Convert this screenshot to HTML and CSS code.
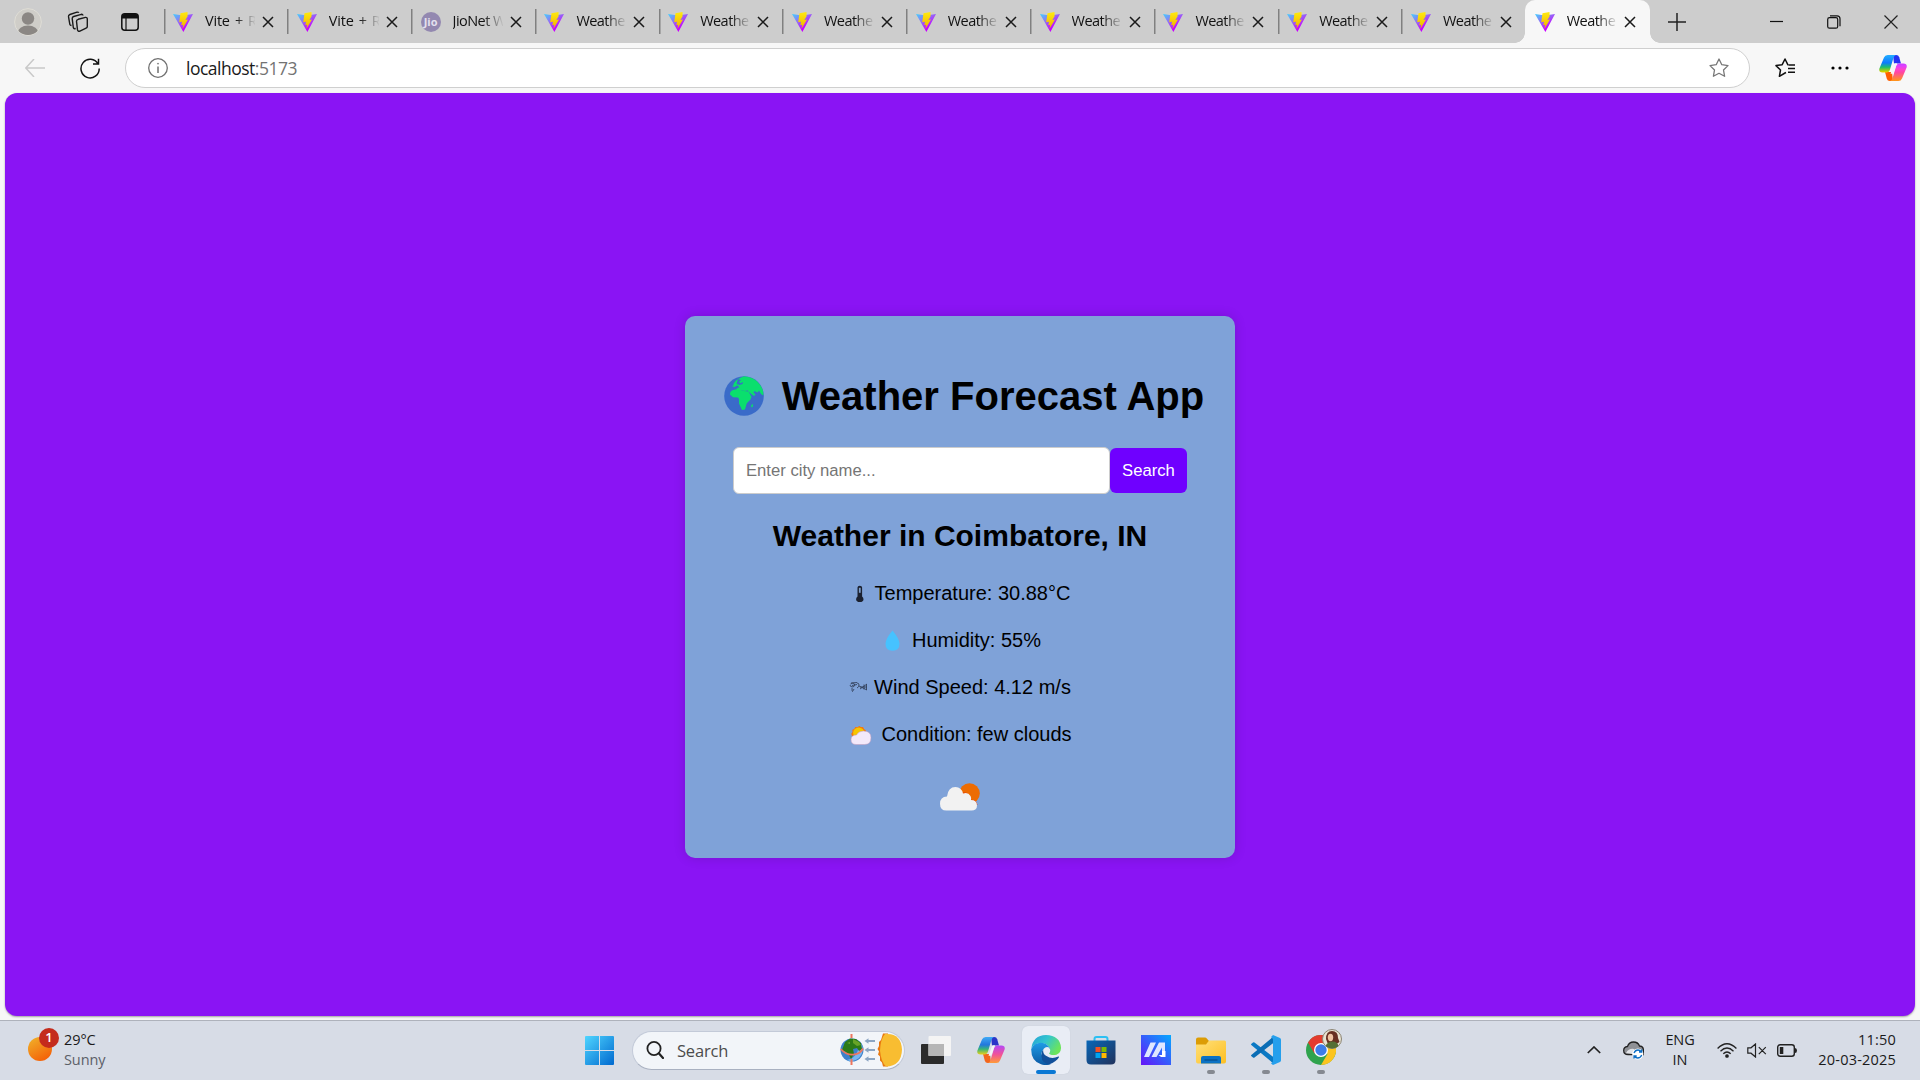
FILE: index.html
```html
<!DOCTYPE html>
<html lang="en">
<head>
<meta charset="utf-8">
<title>Weather Forecast App</title>
<link rel="stylesheet" href="styles.css">
</head>
<body>
<svg class="defs" aria-hidden="true">
  <defs>
    <linearGradient id="vA" x1="0" y1="0" x2=".6" y2=".8"><stop offset="0" stop-color="#41d1ff"/><stop offset=".45" stop-color="#8a7cf5"/><stop offset="1" stop-color="#c800ff"/></linearGradient>
    <linearGradient id="vB" x1="0" y1="0" x2="0" y2="1"><stop offset="0" stop-color="#ffea10"/><stop offset="1" stop-color="#eeb000"/></linearGradient>
    <linearGradient id="cA" x1="0" y1="0" x2="0" y2="1"><stop offset="0" stop-color="#3fa9f5"/><stop offset=".45" stop-color="#2277dd"/><stop offset=".7" stop-color="#38b678"/><stop offset="1" stop-color="#e7d01a"/></linearGradient>
    <linearGradient id="cB" x1="0" y1="0" x2="0" y2="1"><stop offset="0" stop-color="#b548f5"/><stop offset=".5" stop-color="#f0529a"/><stop offset="1" stop-color="#ff9c38"/></linearGradient>
    <linearGradient id="wn" x1="0" y1="0" x2="1" y2="1"><stop offset="0" stop-color="#4fd5ff"/><stop offset="1" stop-color="#0069cf"/></linearGradient>
    <linearGradient id="eA" x1="0" y1="0" x2="1" y2=".5"><stop offset="0" stop-color="#249fd6"/><stop offset=".5" stop-color="#32c5cf"/><stop offset="1" stop-color="#6be45c"/></linearGradient>
    <linearGradient id="eB" x1="0" y1="0" x2="0" y2="1"><stop offset="0" stop-color="#1e9be5"/><stop offset="1" stop-color="#0c59a4"/></linearGradient>
    <linearGradient id="st" x1="0" y1="0" x2="1" y2="1"><stop offset="0" stop-color="#0867b8"/><stop offset="1" stop-color="#21325c"/></linearGradient>
    <linearGradient id="ai" x1="1" y1="0" x2="0" y2="1"><stop offset="0" stop-color="#04a8ff"/><stop offset="1" stop-color="#6713f8"/></linearGradient>
    <linearGradient id="fd" x1="0" y1="0" x2="1" y2="1"><stop offset="0" stop-color="#ffe07a"/><stop offset="1" stop-color="#fdbf22"/></linearGradient>
    <symbol id="vite" viewBox="0 0 20 20"><path d="M0 2 10 3.500 20 2 10.400 20Z" fill="url(#vA)"/><path d="M14.500 0 7.500 1.200 6.200 10.200 9 9.700 8.300 13.200 10.200 12.800 9.400 17 15 7.400 12.400 7.900 14.600 4.200Z" fill="url(#vB)"/></symbol>
    <symbol id="x" viewBox="0 0 12 12"><path d="M1 1l10 10M11 1 1 11" fill="none" stroke="#1a1a1a" stroke-width="1.500"/></symbol>
    <symbol id="copilot" viewBox="0 0 28 26"><path d="M14 0h3.200q2.300 0 3 2.300L22 8.500h-7Z" fill="#2b35c8"/><path d="M14 26h-3.200q-2.300 0-3-2.300L6 17h7Z" fill="#f2661d"/><path d="M5 2.600Q5.900 0 8.700 0H17q-1.800.3-2.600 3L11 14.500Q10.200 17.400 7.400 17.400H3.500Q-.5 17.400.4 13.500Z" fill="url(#cA)"/><path d="M23 23.400q-.9 2.600-3.700 2.600H11q1.800-.3 2.600-3L17 11.500q.8-2.900 3.600-2.900h3.900q4 0 3.100 3.900Z" fill="url(#cB)"/><path d="m14.800 9.500-3.300 9.300h1.600q1.200 0 1.700-1.500L18 8.200h-1.400q-1.300 0-1.800 1.300Z" fill="#f5f5f8"/></symbol>
  </defs>
</svg>

<header class="browser">
  <div class="tabstrip">
    <div class="strip-tools">
      <svg class="avatar" viewBox="0 0 28 28"><defs><clipPath id="av"><circle cx="14" cy="14" r="13"/></clipPath></defs><circle cx="14" cy="14" r="13.400" fill="#cfcdc8" stroke="#dfddd6"/><g fill="#8b8784" clip-path="url(#av)"><circle cx="14" cy="10.500" r="6.200"/><ellipse cx="14" cy="25.500" rx="10.500" ry="8"/></g></svg>
      <svg class="work" viewBox="0 0 22 22" fill="none" stroke="#1a1a1a" stroke-width="1.400" stroke-linejoin="round"><path d="m11.200 8.300 7.300-1.900q1.800-.2 1.800 1.500v7.700q0 1.200-1.200 1.600l-6.200 2.900q-2 .6-2.400-1.200L9.500 10.300q-.1-1.500 1.700-2Z"/><path d="m8.700 17.500-1.100.300q-1-.1-1.300-1.300L5.200 7.700q-.1-1.700 1.500-2.200l7.600-2.200q1.500-.1 1.700 1.200"/><path d="M4.500 14.500q-1.300 0-1.700-1.300L1.500 5.700Q1.300 4.100 2.900 3.500L10 1.200q1.400-.2 1.800.6"/></svg>
      <svg class="tabact" viewBox="0 0 18 18"><rect x=".8" y=".8" width="16.400" height="16.400" rx="3" fill="none" stroke="#111" stroke-width="1.500"/><path d="M1 5V3.500Q1 1 3.500 1h11Q17 1 17 3.500V5.500H1Z" fill="#111"/><path d="M5 5v12" stroke="#111" stroke-width="1.200"/></svg>
    </div>
    <div class="tab"><svg class="fav"><use href="#vite"/></svg><span class="title spaced">Vite + R</span><svg class="close"><use href="#x"/></svg></div>
    <div class="tab"><svg class="fav"><use href="#vite"/></svg><span class="title spaced">Vite + R</span><svg class="close"><use href="#x"/></svg></div>
    <div class="tab"><span class="fav jio">Jio</span><span class="title">JioNet W</span><svg class="close"><use href="#x"/></svg></div>
    <div class="tab"><svg class="fav"><use href="#vite"/></svg><span class="title">Weathe</span><svg class="close"><use href="#x"/></svg></div>
    <div class="tab"><svg class="fav"><use href="#vite"/></svg><span class="title">Weathe</span><svg class="close"><use href="#x"/></svg></div>
    <div class="tab"><svg class="fav"><use href="#vite"/></svg><span class="title">Weathe</span><svg class="close"><use href="#x"/></svg></div>
    <div class="tab"><svg class="fav"><use href="#vite"/></svg><span class="title">Weathe</span><svg class="close"><use href="#x"/></svg></div>
    <div class="tab"><svg class="fav"><use href="#vite"/></svg><span class="title">Weathe</span><svg class="close"><use href="#x"/></svg></div>
    <div class="tab"><svg class="fav"><use href="#vite"/></svg><span class="title">Weathe</span><svg class="close"><use href="#x"/></svg></div>
    <div class="tab"><svg class="fav"><use href="#vite"/></svg><span class="title">Weathe</span><svg class="close"><use href="#x"/></svg></div>
    <div class="tab"><svg class="fav"><use href="#vite"/></svg><span class="title">Weathe</span><svg class="close"><use href="#x"/></svg></div>
    <div class="tab active"><svg class="fav"><use href="#vite"/></svg><span class="title">Weathe</span><svg class="close"><use href="#x"/></svg></div>
    <svg class="newtab" viewBox="0 0 18 18"><path d="M9 0v18M0 9h18" stroke="#222" stroke-width="1.500"/></svg>
    <div class="window-buttons">
      <svg viewBox="0 0 14 14"><path d="M0 6.500h13" stroke="#111" stroke-width="1.200"/></svg>
      <svg viewBox="0 0 14 14" fill="none" stroke="#111" stroke-width="1.200"><rect x=".7" y="2.700" width="10" height="10.500" rx="1.800"/><path d="M3 .8h7q3 0 3 3v7.500"/></svg>
      <svg viewBox="0 0 14 14"><path d="m.5.5 13 13M13.500.5l-13 13" stroke="#222" stroke-width="1.200"/></svg>
    </div>
  </div>
  <div class="toolbar">
    <svg class="back" viewBox="0 0 20 18"><path d="M9 0 .8 9 9 18M1 9h19" fill="none" stroke="#c9c9c9" stroke-width="1.500"/></svg>
    <svg class="reload" viewBox="0 0 20 21"><path d="M18 6A9.100 9.300 0 1 0 19.200 10.500M18.500.8V6H13" fill="none" stroke="#111" stroke-width="1.500"/></svg>
    <div class="address">
      <svg class="info" viewBox="0 0 20 20" fill="none" stroke="#707070"><circle cx="10" cy="10" r="9.300" stroke-width="1.300"/><path d="M10 8.500V15" stroke-width="1.500"/><circle cx="10" cy="5.700" r=".5"/></svg>
      <span class="url">localhost<span class="port">:5173</span></span>
      <svg class="star" viewBox="0 0 20 20"><path d="m10 1 2.800 5.700 6.200.9-4.500 4.400 1.100 6.300L10 15.300l-5.600 3 1.100-6.300L1 7.600l6.200-.9Z" fill="none" stroke="#777" stroke-width="1.300" stroke-linejoin="round"/></svg>
    </div>
    <svg class="favs" viewBox="0 0 20 20"><path d="M11 14.500 10 15l-5.600 3.300L5.500 12 1 7.600l6.200-.9L10 1l2.800 5.700 1 .2M13 10.500h7M13 14.300h7M14 6.900h6" fill="none" stroke="#111" stroke-width="1.500" stroke-linejoin="round"/></svg>
    <svg class="dots" viewBox="0 0 18 4"><circle cx="2" cy="2" r="1.600"/><circle cx="9" cy="2" r="1.600"/><circle cx="16" cy="2" r="1.600"/></svg>
    <svg class="copilot vivid"><use href="#copilot"/></svg>
  </div>
</header>

<div class="viewport">
  <main class="page">
    <section class="card">
      <h1><svg class="globe" viewBox="0 0 40 40"><circle cx="20" cy="20" r="19.800" fill="#3a6bc9"/><path d="M9.500 8Q12 3.500 16 2l4-1.700Q30 1 35.500 8q4.500 6 3.800 11.500L37 18l-2-3.500-1.500 2-3-1.500-1 1.500 2 2-1.500 1.500-4-3-2.300-2.500-3.200.5-2.500-1-2 .5-3.500-2 3-1.300-2.300-2-3 2-2.500-1.500L13.500 10l-4 .5Zm-1 6.200 5.500-1.500 6 2.300 4.500.5 3 5.500-1 2.500-3 3-1 1.500-1.500 5.500-3 .5-3-6.500V23l-1-1.500-5-.3-3-2.700q-.2-3 2.500-4.300Z" fill="#0adf6d"/><path d="m14 3 3 1.200-2 1.500 1.500 1.500 2.500-1.200-.5 2-3 1-3-1Z" fill="#3a6bc9"/><path d="m27 29.500 1.800-1.800.2 2.800-1.500 1Z" fill="#0adf6d"/></svg><span>Weather Forecast App</span></h1>
      <form class="search">
        <input type="text" placeholder="Enter city name...">
        <button type="button">Search</button>
      </form>
      <h2>Weather in Coimbatore, IN</h2>
      <p><svg class="narrow" viewBox="0 0 19 22"><path d="M7.500 4.500q0-1.700 2.300-1.700t2.300 1.700v9q1.400 1 1.400 2.700 0 2.800-3.700 2.800t-3.700-2.800q0-1.700 1.400-2.700Z" fill="#1b2130"/><path d="M9.800 4.800v5" stroke="#7e9ecb" stroke-width="1.800"/></svg><span>Temperature: 30.88°C</span></p>
      <p><svg class="wide" viewBox="0 0 27 22"><path d="M13.500.5q7 8.500 7 13.200 0 7-7 7t-7-7Q6.500 9 13.500.5Z" fill="#46c2ff"/></svg><span>Humidity: 55%</span></p>
      <p><svg class="narrow" viewBox="0 0 19 22" fill="none" stroke="#34435f" stroke-width=".9"><path d="M1.500 7q3-2 4 0T4 10q-3 0-3-2m1-2L8 5.500M3 8.500l5-1M5 12q-1 2-1.500 2.500T3 11M8 6q2 0 2 2T8 11M10 9l8 4M11 12l7-5M15 7.500v5M17.500 7v6M11 10h7"/></svg><span>Wind Speed: 4.12 m/s</span></p>
      <p><svg class="wide cond" viewBox="0 0 27 22"><path d="m4 13-.8-2.200L4.500 9l-.2-2.200 2-.8.900-2 2.200.3L11.200 3l1.800 1 2.100 0 .9 2 1.800 1.200v2.300L17 13Z" fill="#f47a0c"/><circle cx="10.700" cy="10" r="5.600" fill="#f6c600"/><path d="M8 21.500q-5 0-5-5Q3 12 8.500 12 10.500 8 15.500 8q7.500 0 7.500 6.800t-6.500 6.700Z" fill="#f3e9fa" stroke="#c59bbb" stroke-width=".5"/></svg><span>Condition: few clouds</span></p>
      <svg class="sky" viewBox="0 0 40 28"><circle cx="29.500" cy="10.500" r="10.300" fill="#ed6c02"/><path d="M20 11q1.500-2 4-1.500 4-.5 5 3.500 1 4 4 4 3.500.5 4.500 5L25 22Z" fill="#e33d05"/><path d="M6.500 27.500Q0 27.500 0 20.700t7-7.200Q8 4 15.500 4q6 0 7.500 6.500 5-2 7.500 2.500 1 2 .5 4 6 0 6 5.500 0 5-5.500 5Z" fill="#f2f2f2"/></svg>
    </section>
  </main>
</div>

<footer class="taskbar">
  <div class="widgets">
    <span class="sun"><b>1</b></span>
    <div class="lines"><span>29°C</span><span class="muted">Sunny</span></div>
  </div>
  <nav class="apps">
    <svg class="win" viewBox="0 0 29 29" fill="url(#wn)"><path d="M1 0h13v14H0V1Q0 0 1 0Zm14 0h13q1 0 1 1v13H15ZM0 15h14v14H1q-1 0-1-1Zm15 0h14v13q0 1-1 1H15Z"/></svg>
    <div class="find">
      <svg class="lens" viewBox="0 0 18 18" fill="none" stroke="#222"><circle cx="8" cy="7.500" r="6.600" stroke-width="1.800"/><path d="m12.800 12.300 4.200 4.700" stroke-width="2.200" stroke-linecap="round"/></svg>
      <span>Search</span>
      <svg class="doodle" viewBox="0 0 62 34"><circle cx="12" cy="17" r="11.500" fill="#3d80cb"/><path d="M20 9q6 8-1 16-6 5-12 2 11-2 13-18Z" fill="#79b7ef"/><path d="m5 9 5-3.500 6 .5 5 4 1 6-3 2-2-3-4 1 1 5-3 5-2-4-3-3-4-2Z" fill="#2c7a17"/><path d="m13 6 6 3 2 3-4 1-4-3ZM7 10l3-1v2Z" fill="#67a428"/><path d="M11.500 1v4M11.500 26v6" stroke="#ed765e" stroke-width="2"/><path d="M.8 16q5 6 12 5.700T23 15.500" fill="none" stroke="#ed765e" stroke-width="1.700"/><g fill="#8ba5c3"><path d="m24.500 8 4-2.800V7H35v2h-6.500v1.800Zm0 9 4-2.800V16H35v2h-6.500v1.800Zm0 9 4-2.800V25H35v2h-6.500v1.800Z"/></g><path d="M43 .5h5v33h-5l-1-4-2-2v-4l-2-2 1-3-1.500-2.500L39 13v-4l2-2Z" fill="#e87810"/><path d="M45 1q16-1.500 17 15.500Q61.500 33 46 33.500 41 29 40 17.500 40.500 6 45 1Z" fill="#f8bd31"/></svg>
    </div>
    <div class="app"><svg class="taskview" viewBox="0 0 30 28"><rect y="8" width="23" height="20" rx="1" fill="#2b2b2b"/><rect x="7.500" y="0" width="22.500" height="20" rx="1" fill="#f4f4f4"/><path d="M7.500 8H23v12H7.500Z" fill="#b6b6b6"/></svg></div>
    <div class="app"><svg class="copilot"><use href="#copilot"/></svg></div>
    <div class="app current"><svg class="big" viewBox="0 0 30 30"><path d="M.3 13.500Q2 .3 15 0q14 .5 15 12.500.2 7.500-8 7.700-4.500 0-4-2 1.700-1.500 1-4Q17.500 9 11 8 4 7.500.3 13.500Z" fill="url(#eA)"/><path d="M.2 14Q4 6.500 12 8q5.500 1.300 7 6-8-1.500-8.500 4.500.5 8 9.500 10.500-5 2-10 .3Q0 26 .2 14Z" fill="url(#eB)"/><path d="M11 16.500q-2.500 10 5.500 12.800 5 0 10-5 2.500-3 1-2.800-7 3-12-.5-4-2-3-6-1 .5-1.500 1.500Z" fill="#12509a"/><path d="M12.500 14q2.500-3 5.500-1.500 1.500 2 .8 4-1.500 1.800 0 3 3 1.300 9 .5-6 3.500-12 .5-4-2.500-3.300-6.500Z" fill="#e9edf5"/></svg></div>
    <div class="app"><svg class="big" viewBox="0 0 30 30"><path d="M8.500 7V4q0-2 2-2h9q2 0 2 2v3" fill="none" stroke="#2cc0f3" stroke-width="2"/><path d="M.5 5.500h29v19.500q0 4.500-4.500 4.500H5Q.5 29.500.5 25Z" fill="url(#st)"/><path d="M9.500 12h5v5h-5Z" fill="#f25022"/><path d="M15.500 12h5v5h-5Z" fill="#7fba00"/><path d="M9.500 18h5v5h-5Z" fill="#00a4ef"/><path d="M15.500 18h5v5h-5Z" fill="#ffb900"/></svg></div>
    <div class="app"><svg class="big" viewBox="0 0 30 30"><path d="M0 0h30v30H0Z" fill="url(#ai)"/><path d="M3 22 9.500 7.500H15L8 22Zm7.500 0L18 7.500h6V16h-3v-3.500L15.500 22Z" fill="#dfe6ff"/><path d="M21 16h3.500v6H20l-2.500-2H21Z" fill="#fff"/></svg></div>
    <div class="app open"><svg class="big" viewBox="0 0 30 30"><path d="M0 4.500Q0 2.500 2 2.500h7q1 0 2 1.200L13 6v6H0Z" fill="#dc9c04"/><path d="M0 9.500h10L13 5.500h15.500Q30 5.500 30 7v19.500q0 2-2 2H2q-2 0-2-2Z" fill="url(#fd)"/><path d="M5 28.500V23q0-2 2-2h16q2 0 2 2v5.500Z" fill="#0c72c4"/><path d="M8.500 25h13" stroke="#07508f" stroke-width="1.300"/></svg></div>
    <div class="app open"><svg class="big" viewBox="0 0 30 30"><path d="M0 9.800q0-.8.800-1.300L2 7.500q.7-.4 1.500 0L23 22.500V29Z" fill="#0b79c4"/><path d="M0 20.200q0 .8.800 1.300l1.200 1q.7.4 1.500 0L23 7.500V1Z" fill="#0a6db5"/><path d="m22 0 7 3q1 .5 1 1.700v20.600q0 1.200-1 1.700l-7 3-2-1.500 2-2V4L20 2Z" fill="#259fec"/></svg></div>
    <div class="app open chrome"><svg class="big" viewBox="0 0 30 30"><circle cx="15" cy="15" r="15" fill="#2fa34d"/><path d="M28 7.500A15 15 0 0 1 15 30l6.500-11L15 7.500Z" fill="#fbc41f"/><path d="M2 7.500 8.500 18.500 15 8.200l13-.7A15 15 0 0 0 2 7.500Z" fill="#e33b2e"/><circle cx="15" cy="15" r="7" fill="#fff"/><circle cx="15" cy="15" r="5.700" fill="#3d7de8"/></svg><svg class="profile" viewBox="0 0 20 20"><circle cx="10" cy="10" r="9.500" fill="#e8e2d0" stroke="#8b8473"/><path d="M4 10Q4 2 10 2t6 7l1.500 4-3 2-9-1Z" fill="#683022"/><ellipse cx="8.500" cy="8.500" rx="2.700" ry="3.700" fill="#efc3a2"/><path d="M3.500 17q2-4.500 7-4.500t6 4.500q-6 5-13 0Z" fill="#556e34"/></svg></div>
  </nav>
  <div class="tray">
    <svg class="chev" viewBox="0 0 14 8"><path d="m.8 7 6.200-6 6.200 6" fill="none" stroke="#222" stroke-width="1.700"/></svg>
    <svg class="cloud" viewBox="0 0 21 19"><path d="M5 13.500q-4.300 0-4.300-4Q.7 6 4.500 5.500 6 1 10.500 1T16.500 5q3.500 0 4 4v4.500Z" fill="#8f9196" stroke="#222" stroke-width="1.300"/><path d="M3 12q3-5 8-4l2 5.500Z" fill="#e1e3e7"/><circle cx="14.800" cy="13" r="5.600" fill="#fff"/><path d="M11 12q1.200-3 4-3 2 0 3.500 2M18.700 14q-1.200 3-4 3-2 0-3.500-2M18.700 8.500V11H16M11 17.500V15h2.700" fill="none" stroke="#0b6ec5" stroke-width="1.300"/></svg>
    <div class="lines lang"><span>ENG</span><span>IN</span></div>
    <svg class="wifi" viewBox="0 0 20 15" fill="none" stroke="#222" stroke-width="1.300"><path d="M.6 5.500q9.400-9.500 18.800 0M3.500 8.200q6.500-6.500 13 0M6.300 10.800q3.700-3.700 7.400 0"/><circle cx="10" cy="13" r="1.200" fill="#222"/></svg>
    <svg class="mute" viewBox="0 0 20 15" fill="none" stroke="#222" stroke-width="1.200"><path d="M.8 4.800H4L8.500 1v13L4 10.200H.8Zm11-.6 7 7m0-7-7 7"/></svg>
    <svg class="batt" viewBox="0 0 20 13"><rect x=".7" y=".7" width="16.600" height="11.600" rx="2.500" fill="none" stroke="#222" stroke-width="1.400"/><path d="M2.800 3h3.500v7H2.800ZM18 4q2 0 2 2.500T18 9Z" fill="#222"/></svg>
    <div class="lines clock"><span>11:50</span><span>20-03-2025</span></div>
  </div>
</footer>
</body>
</html>
```
FILE: styles.css
```css
* { box-sizing: border-box; }

body {
  margin: 0;
  width: 1920px;
  height: 1080px;
  overflow: hidden;
  display: flex;
  flex-direction: column;
  background: #f7f7f7;
  font-family: "Open Sans", "Noto Sans", sans-serif;
  color: #1a1a1a;
}

svg { display: block; flex: none; }
.defs { position: absolute; width: 0; height: 0; }

/* Tab strip */
.tabstrip {
  display: flex;
  align-items: center;
  height: 43px;
  background: #cdcdcd;
}
.strip-tools {
  display: flex;
  align-items: center;
  width: 163px;
  padding-left: 14px;
}
.avatar { width: 28px; height: 28px; }
.work { width: 22px; height: 22px; margin-left: 25px; }
.tabact { width: 18px; height: 18px; margin-left: 32px; }

.tab {
  display: flex;
  align-items: center;
  flex: none;
  width: 123.800px;
  height: 43px;
  padding-left: 10px;
  background: linear-gradient(#808080, #808080) 0.500px 9px / 1.500px 25px no-repeat;
}
.fav { width: 20px; height: 20px; flex: none; }
.jio {
  border-radius: 50%;
  background: #9388b0;
  color: #e4e0ee;
  font: bold 11px/19px "Open Sans", sans-serif;
  text-align: center;
}
.title {
  width: 50px;
  margin: -2px 0 0 12px;
  overflow: hidden;
  white-space: nowrap;
  font-size: 14.500px;
  line-height: 20px;
  letter-spacing: -0.550px;
  color: #111;
  -webkit-mask-image: linear-gradient(90deg, #000 60%, transparent 102%);
  mask-image: linear-gradient(90deg, #000 60%, transparent 102%);
}
.title.spaced { letter-spacing: -0.200px; word-spacing: 1.500px; }
.close { width: 12px; height: 12px; margin-left: 7px; }
.tab.active {
  position: relative;
  width: 125px;
  background: #f7f7f7;
  border-radius: 10px 10px 0 0;
}
.tab.active::before,
.tab.active::after {
  content: "";
  position: absolute;
  bottom: 0;
  width: 10px;
  height: 10px;
}
.tab.active::before { left: -10px; background: radial-gradient(circle at 0 0, transparent 9.500px, #f7f7f7 10px); }
.tab.active::after { right: -10px; background: radial-gradient(circle at 100% 0, transparent 9.500px, #f7f7f7 10px); }
.newtab { width: 18px; height: 18px; margin-left: 18px; }
.window-buttons {
  display: flex;
  gap: 43px;
  margin-left: auto;
  padding-right: 22px;
}
.window-buttons svg { width: 14px; height: 14px; }

/* Toolbar */
.toolbar {
  display: flex;
  align-items: center;
  height: 50px;
  padding: 0 13px 0 25px;
}
.back { width: 20px; height: 18px; }
.reload { width: 20px; height: 21px; margin-left: 35px; }
.address {
  display: flex;
  align-items: center;
  width: 1625px;
  height: 40px;
  margin-left: 25px;
  padding: 0 20px 0 22px;
  border: 1px solid #cfcfcf;
  border-radius: 20px;
  background: #fff;
}
.info { width: 20px; height: 20px; }
.url {
  margin-left: 18px;
  font-size: 17.500px;
  letter-spacing: -0.500px;
  line-height: 24px;
}
.port { color: #737373; }
.star { width: 20px; height: 20px; margin-left: auto; }
.favs { width: 20px; height: 20px; margin-left: 25px; }
.dots { width: 18px; height: 4px; margin-left: 36px; }
.copilot { width: 28px; height: 26px; }
.copilot.vivid { margin-left: auto; filter: saturate(1.300); }

/* Page area */
.viewport { height: 927px; padding: 0 5px 4px; }
.page {
  display: flex;
  justify-content: center;
  align-items: flex-start;
  height: 923px;
  padding-top: 223px;
  border-radius: 12px;
  background: #8a14f4;
  box-shadow: 0 1px 2px rgba(0, 0, 0, 0.350);
}
.card {
  display: flex;
  flex-direction: column;
  align-items: center;
  width: 550px;
  height: 542px;
  padding-top: 57px;
  border-radius: 10px;
  background: #7fa2d8;
  box-shadow: 0 0 12px rgba(0, 0, 0, 0.150);
  font-family: "Liberation Sans", Arial, sans-serif;
  color: #000;
}
.card h1 {
  display: flex;
  align-items: center;
  gap: 18px;
  margin: 0 0 28px;
  padding-left: 8px;
  font-size: 40px;
  line-height: 46px;
  white-space: nowrap;
}
.globe { width: 40px; height: 40px; }
.search {
  display: flex;
  align-items: center;
  width: 454px;
  height: 47px;
}
.search input {
  width: 377px;
  height: 47px;
  padding: 0 12px;
  border: 1px solid #ccc;
  border-radius: 6px;
  background: #fff;
  font: 16.670px "Liberation Sans", Arial, sans-serif;
}
.search input::placeholder { color: #757575; }
.search button {
  width: 77px;
  height: 45px;
  padding: 0;
  border: 0;
  border-radius: 6px;
  background: #6f00ff;
  color: #fff;
  font: 16.670px "Liberation Sans", Arial, sans-serif;
}
.card h2 {
  margin: 25px 0 17px;
  font-size: 30px;
  line-height: 34px;
}
.card p {
  display: flex;
  align-items: center;
  gap: 6px;
  margin: 0;
  font-size: 20px;
  line-height: 47px;
}
.narrow { width: 19px; height: 22px; }
.wide { width: 27px; height: 22px; }
.cond { margin-bottom: 2px; }
.sky { width: 40px; height: 28px; margin-top: 25px; }

/* Taskbar */
.taskbar {
  display: flex;
  align-items: center;
  height: 60px;
  padding-bottom: 1px;
  border-top: 1px solid #aeb2bb;
  background: #d7dce6;
}
.widgets {
  display: flex;
  align-items: center;
  width: 585px;
  padding-left: 28px;
}
.sun {
  position: relative;
  width: 24px;
  height: 24px;
  margin-top: -3px;
  border-radius: 50%;
  background: linear-gradient(150deg, #f0b52b, #f46309 85%);
}
.sun b {
  position: absolute;
  left: 11px;
  top: -9px;
  width: 20px;
  height: 20px;
  border-radius: 50%;
  background: #c42b1c;
  color: #fff;
  font-size: 13px;
  font-weight: 600;
  line-height: 19px;
  text-align: center;
}
.lines {
  display: flex;
  flex-direction: column;
  margin-top: -1px;
  font-size: 14.500px;
  line-height: 20px;
  letter-spacing: -0.100px;
}
.widgets .lines { margin-left: 12px; }
.muted { color: #5c6068; }

.apps { display: flex; align-items: center; }
.win { width: 29px; height: 29px; }
.find {
  display: flex;
  align-items: center;
  width: 273px;
  height: 39px;
  margin: 0 3px 0 18px;
  padding: 0 2px 0 13px;
  border: 1px solid #c3cad8;
  border-bottom-color: #a9b1c1;
  border-radius: 20px;
  background: #f2f5f9;
}
.lens { width: 18px; height: 18px; }
.find span { margin-left: 13px; font-size: 16.500px; letter-spacing: -0.200px; color: #4c4c4c; }
.doodle { width: 62px; height: 34px; margin-left: auto; }
.app {
  position: relative;
  display: flex;
  align-items: center;
  justify-content: center;
  width: 48px;
  height: 48px;
  margin: 0 3.500px;
  border-radius: 6px;
}
.taskview { width: 30px; height: 28px; }
.big { width: 30px; height: 30px; }
.app.current { background: #e9edf5; box-shadow: 0 0 1px #b9c0ce; }
.app.open::after,
.app.current::after {
  content: "";
  position: absolute;
  bottom: 0;
  width: 8px;
  height: 4px;
  border-radius: 2px;
  background: #858991;
}
.app.current::after { width: 20px; background: #0a78d4; }
.profile { position: absolute; left: 25px; top: 3px; width: 20px; height: 20px; }

.tray {
  display: flex;
  align-items: center;
  margin-left: auto;
  padding-right: 24px;
}
.chev { width: 14px; height: 8px; }
.cloud { width: 21px; height: 19px; margin-left: 22px; }
.lang { width: 30px; margin-left: 21px; align-items: center; }
.wifi { width: 20px; height: 15px; margin-left: 22px; }
.mute { width: 20px; height: 15px; margin-left: 10px; }
.batt { width: 20px; height: 13px; margin-left: 10px; }
.clock { width: 78px; margin-left: 21px; align-items: flex-end; letter-spacing: 0.200px; }
```
